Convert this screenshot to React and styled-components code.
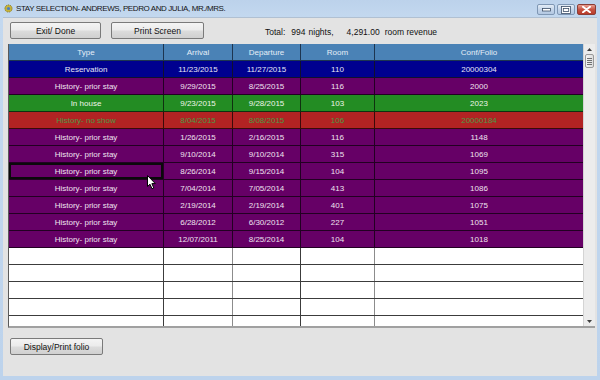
import styled, { createGlobalStyle } from "styled-components";

const GlobalStyle = createGlobalStyle`
  html, body { margin: 0; padding: 0; }
  body {
    font-family: "Liberation Sans", Arial, sans-serif;
    background: #e3e3e3;
  }
`;

const stays = [
  { kind: "reservation", type: "Reservation", arrival: "11/23/2015", departure: "11/27/2015", room: "110", folio: "20000304" },
  { kind: "history", type: "History- prior stay", arrival: "9/29/2015", departure: "8/25/2015", room: "116", folio: "2000" },
  { kind: "inhouse", type: "In house", arrival: "9/23/2015", departure: "9/28/2015", room: "103", folio: "2023" },
  { kind: "noshow", type: "History- no show", arrival: "8/04/2015", departure: "8/08/2015", room: "106", folio: "20000184" },
  { kind: "history", type: "History- prior stay", arrival: "1/26/2015", departure: "2/16/2015", room: "116", folio: "1148" },
  { kind: "history", type: "History- prior stay", arrival: "9/10/2014", departure: "9/10/2014", room: "315", folio: "1069" },
  { kind: "history", type: "History- prior stay", arrival: "8/26/2014", departure: "9/15/2014", room: "104", folio: "1095", selected: true },
  { kind: "history", type: "History- prior stay", arrival: "7/04/2014", departure: "7/05/2014", room: "413", folio: "1086" },
  { kind: "history", type: "History- prior stay", arrival: "2/19/2014", departure: "2/19/2014", room: "401", folio: "1075" },
  { kind: "history", type: "History- prior stay", arrival: "6/28/2012", departure: "6/30/2012", room: "227", folio: "1051" },
  { kind: "history", type: "History- prior stay", arrival: "12/07/2011", departure: "8/25/2014", room: "104", folio: "1018" },
];

const rowColors = {
  header: { bg: "#4a82b6", fg: "#e4edf6", line: "#1d3550" },
  reservation: { bg: "#00008f", fg: "#e6e6f6", line: "#101030" },
  history: { bg: "#660066", fg: "#efe2ef", line: "#220022" },
  inhouse: { bg: "#238c23", fg: "#eef5e8", line: "#103010" },
  noshow: { bg: "#b22323", fg: "#4d9a45", line: "#3a0a0a" },
  empty: { bg: "#ffffff", fg: "#000", line: "#3c3c3c" },
};

function GearIcon() {
  return (
    <svg width="9" height="9" viewBox="0 0 9 9">
      <circle cx="4.5" cy="4.5" r="3.6" fill="#c7b43a" stroke="#7a6a18" strokeWidth="0.8" strokeDasharray="1.2 0.8" />
      <circle cx="4.5" cy="4.5" r="1.6" fill="#4e7fc0" />
    </svg>
  );
}

function Cursor() {
  return (
    <svg width="10" height="15" viewBox="0 0 10 15">
      <path d="M0.5 0.5 L0.5 11.5 L3 9.2 L5 13.8 L6.8 13 L4.9 8.6 L8.3 8.6 Z" fill="#fff" stroke="#000" strokeWidth="1" strokeLinejoin="round" />
    </svg>
  );
}

function App() {
  const emptyRows = [0, 1, 2, 3, 4];
  return (
    <>
      <GlobalStyle />
      <Window>
        <TitleBar>
          <TitleIcon><GearIcon /></TitleIcon>
          <TitleText>STAY SELECTION- ANDREWS, PEDRO AND JULIA, MR./MRS.</TitleText>
          <Controls>
            <CtrlButton>
              <svg width="9" height="4" viewBox="0 0 9 4"><rect x="0.5" y="0.5" width="8" height="2.5" fill="#fff" stroke="#3b4e66" strokeWidth="0.8" /></svg>
            </CtrlButton>
            <CtrlButton>
              <svg width="10" height="8" viewBox="0 0 10 8"><rect x="0.5" y="0.5" width="9" height="7" fill="#fff" stroke="#3b4e66" strokeWidth="0.8" /><rect x="2.3" y="2.5" width="5.4" height="3" fill="none" stroke="#3b4e66" strokeWidth="0.8" /></svg>
            </CtrlButton>
            <CtrlButton $close>
              <svg width="9" height="7" viewBox="0 0 9 7"><path d="M1 0.8 L8 6.2 M8 0.8 L1 6.2" stroke="#fff" strokeWidth="2" strokeLinecap="round" /></svg>
            </CtrlButton>
          </Controls>
        </TitleBar>

        <Client>
          <Toolbar>
            <PushButton $w={91}>Exit/ Done</PushButton>
            <PushButton $w={93}>Print Screen</PushButton>
            <Totals>
              <span>Total:</span>
              <Value $gap={6}>994</Value>
              <Value $gap={3}>nights,</Value>
              <Value $gap={13}>4,291.00</Value>
              <Value $gap={5}>room revenue</Value>
            </Totals>
          </Toolbar>

          <GridFrame>
            <GridBody>
              <Row $kind="header">
                <Cell $kind="header">Type</Cell>
                <Cell $kind="header">Arrival</Cell>
                <Cell $kind="header">Departure</Cell>
                <Cell $kind="header">Room</Cell>
                <Cell $kind="header" $last>Conf/Folio</Cell>
              </Row>
              {stays.map((s, i) => (
                <Row key={i} $kind={s.kind}>
                  <Cell $kind={s.kind} $selected={s.selected}>{s.type}</Cell>
                  <Cell $kind={s.kind}>{s.arrival}</Cell>
                  <Cell $kind={s.kind}>{s.departure}</Cell>
                  <Cell $kind={s.kind}>{s.room}</Cell>
                  <Cell $kind={s.kind} $last>{s.folio}</Cell>
                </Row>
              ))}
              {emptyRows.map((i) => (
                <Row key={"e" + i} $kind="empty">
                  <Cell $kind="empty" />
                  <Cell $kind="empty" $soft />
                  <Cell $kind="empty" />
                  <Cell $kind="empty" $soft />
                  <Cell $kind="empty" $last />
                </Row>
              ))}
              <Pointer><Cursor /></Pointer>
            </GridBody>
            <ScrollBar>
              <ScrollArrow>
                <svg width="5" height="3" viewBox="0 0 5 3"><path d="M0 3 L2.5 0 L5 3 Z" fill="#404040" /></svg>
              </ScrollArrow>
              <Thumb>
                <Grip /><Grip /><Grip /><Grip />
              </Thumb>
              <ScrollTrack />
              <ScrollArrow>
                <svg width="5" height="3" viewBox="0 0 5 3"><path d="M0 0 L2.5 3 L5 0 Z" fill="#404040" /></svg>
              </ScrollArrow>
            </ScrollBar>
          </GridFrame>

          <Footer>
            <PushButton $w={93}>Display/Print folio</PushButton>
          </Footer>
        </Client>
      </Window>
    </>
  );
}

export default App;

const Window = styled.div`
width: 600px;
height: 380px;
box-sizing: border-box;
display: flex;
flex-direction: column;
padding: 0 3px 4px 3px;
background: linear-gradient(to bottom, #bcd2eb 0px, #c3d8ef 17px, #bdd3ec 100%);
`

const TitleBar = styled.div`
height: 17px;
display: flex;
align-items: center;
`

const TitleIcon = styled.div`
width: 9px;
height: 9px;
margin-left: 1px;
display: flex;
`

const TitleText = styled.div`
margin-left: 3px;
font-size: 8px;
letter-spacing: -0.4px;
color: #141414;
white-space: nowrap;
flex: 1;
`

const Controls = styled.div`
display: flex;
gap: 2px;
align-self: flex-start;
margin-top: 4px;
margin-right: 1px;
`

const CtrlButton = styled.div`
width: ${(p) => (p.$close ? 19 : 18)}px;
height: 11px;
box-sizing: border-box;
border: 1px solid ${(p) => (p.$close ? "#8a3d36" : "#7f97b4")};
border-radius: 2px;
display: flex;
align-items: center;
justify-content: center;
background: ${(p) =>
  p.$close
    ? "linear-gradient(to bottom, #e8a093, #c75343 50%, #b83a2a)"
    : "linear-gradient(to bottom, #e3ecf6, #c4d5ea 50%, #b3c8e2)"};
`

const Client = styled.div`
flex: 1;
background: #e3e3e3;
box-sizing: border-box;
padding: 4px 2px 0 5px;
display: flex;
flex-direction: column;
border-top: 1px solid #b0c0d2;
`

const Toolbar = styled.div`
display: flex;
align-items: center;
height: 17px;
padding-left: 2px;
margin-bottom: 5px;
gap: 10px;
`

const PushButton = styled.div`
width: ${(p) => p.$w}px;
height: 17px;
box-sizing: border-box;
border: 1px solid #7a7a7a;
border-radius: 2px;
background: linear-gradient(to bottom, #f4f4f4 0%, #ebebeb 48%, #dcdcdc 52%, #d0d0d0 100%);
display: flex;
align-items: center;
justify-content: center;
font-size: 8.5px;
color: #111;
`

const Totals = styled.div`
margin-left: 51px;
margin-top: 2px;
display: flex;
font-size: 8.5px;
color: #111;
white-space: nowrap;
`

const Value = styled.span`
margin-left: ${(p) => p.$gap}px;
`

const GridFrame = styled.div`
display: flex;
height: 284px;
box-sizing: border-box;
border-left: 1px solid #5a5a5a;
border-bottom: 2px solid #a0a0a0;
`

const GridBody = styled.div`
position: relative;
flex: 1;
overflow: hidden;
`

const Row = styled.div`
display: grid;
grid-template-columns: 155px 69px 68px 74px 1fr;
height: 17px;
box-sizing: border-box;
background: ${(p) => rowColors[p.$kind].bg};
border-bottom: 1px solid ${(p) => rowColors[p.$kind].line};
`

const Cell = styled.div`
display: flex;
align-items: center;
justify-content: center;
font-size: 8px;
color: ${(p) => rowColors[p.$kind].fg};
border-right: ${(p) => (p.$last ? "none" : `1px solid ${p.$soft ? "#8c8c8c" : rowColors[p.$kind].line}`)};
box-shadow: ${(p) => (p.$selected ? "inset 0 0 0 2px #0a0a0a" : "none")};
white-space: nowrap;
`

const Pointer = styled.div`
position: absolute;
left: 138px;
top: 131px;
display: flex;
`

const ScrollBar = styled.div`
width: 12px;
display: flex;
flex-direction: column;
background: #ececec;
border-left: 1px solid #d4d4d4;
box-sizing: border-box;
`

const ScrollArrow = styled.div`
height: 10px;
display: flex;
align-items: center;
justify-content: center;
`

const Thumb = styled.div`
height: 14px;
margin: 0 1px;
box-sizing: border-box;
border: 1px solid #9a9a9a;
border-radius: 2px;
background: linear-gradient(to right, #f4f4f4, #dedede);
display: flex;
flex-direction: column;
align-items: center;
justify-content: center;
gap: 1px;
`

const Grip = styled.div`
width: 5px;
height: 1px;
background: #707070;
`

const ScrollTrack = styled.div`
flex: 1;
`

const Footer = styled.div`
padding-left: 2px;
margin-top: 10px;
`
